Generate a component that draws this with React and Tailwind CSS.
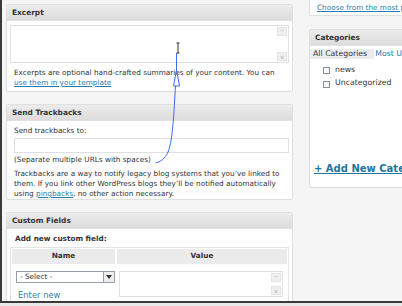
import React from 'react';

const font = { fontFamily: '"DejaVu Sans", Verdana, sans-serif' };

const Box = ({ title, className = '', children }) => (
  <div className={`shrink-0 border border-[#dfdfdf] bg-white rounded-[2px] ${className}`}>
    <div className="h-[16px] bg-gradient-to-b from-[#ececec] to-[#dcdcdc] border-b border-[#e2e2e2] px-[5px] flex items-center text-[7.4px] font-bold text-[#333]">
      {title}
    </div>
    {children}
  </div>
);

const ScrollArrows = () => (
  <div className="w-[10px] h-full flex flex-col justify-between py-[1px]">
    <div className="h-[9px] bg-[#f0f0f0] border border-[#e4e4e4] flex items-center justify-center text-[6px] text-[#aaa] leading-none">^</div>
    <div className="h-[9px] bg-[#f0f0f0] border border-[#e4e4e4] flex items-center justify-center text-[6px] text-[#aaa] leading-none">v</div>
  </div>
);

export default function App() {
  return (
    <div style={font} className="w-[402px] h-[306px] bg-[#e8e8e8] overflow-hidden relative">
      <div className="h-[303px] bg-[#f5f5f5] border-l-2 border-b-2 border-[#3a3a3a] flex gap-[16px] pl-[4px] overflow-hidden">
        {/* left column */}
        <div className="w-[287px] shrink-0 flex flex-col gap-[12px] pt-[4px]">
          <Box title="Excerpt" className="h-[88px]">
            <div className="mx-[3px] mt-[4px] h-[38px] border border-[#dfdfdf] flex justify-end pr-[1px]">
              <ScrollArrows />
            </div>
            <p className="pl-[7px] pr-[4px] mt-[5px] text-[7.3px] leading-[10px] text-[#333]">
              Excerpts are optional hand-crafted summaries of your content. You can{' '}
              <span className="text-[#2b7bb0] underline">use them in your template</span>
            </p>
          </Box>
          <Box title="Send Trackbacks" className="h-[96px]">
            <div className="pl-[7px] pr-[4px] pt-[5px] text-[7.3px] text-[#333]">
              <div className="leading-[10px]">Send trackbacks to:</div>
              <div className="mt-[2px] mr-[-1px] h-[15px] border border-[#dfdfdf]" />
              <div className="mt-[2px] leading-[10px]">(Separate multiple URLs with spaces)</div>
              <p className="mt-[4px] leading-[10px]">
                Trackbacks are a way to notify legacy blog systems that you’ve linked to them. If you link other WordPress blogs they’ll be notified automatically using{' '}
                <span className="text-[#2b7bb0] underline">pingbacks</span>, no other action necessary.
              </p>
            </div>
          </Box>
          <Box title="Custom Fields" className="h-[110px] rounded-b-none">
            <div className="px-[8px] pt-[5px] text-[7.3px] font-bold text-[#333] leading-[10px]">Add new custom field:</div>
            <div className="mx-[3px] mt-[3px] border border-[#e4e4e4] border-b-0 p-[1px]">
              <div className="flex gap-[2px] h-[15px] text-[7.3px] font-bold text-[#333]">
                <div className="w-[103px] bg-[#ebebeb] flex items-center justify-center">Name</div>
                <div className="flex-1 bg-[#ebebeb] flex items-center justify-center">Value</div>
              </div>
              <div className="flex gap-[4px] pt-[7px] px-[4px]">
                <div className="w-[99px] shrink-0">
                  <div className="h-[12px] border border-[#9aa0aa] flex items-center text-[7.3px] text-[#333]">
                    <span className="flex-1 pl-[3px]">- Select -</span>
                    <div className="w-[11px] h-full bg-[#eee] border-l border-[#9aa0aa] flex items-center justify-center">
                      <svg width="6" height="4" viewBox="0 0 6 4"><path d="M0 0h6L3 4z" fill="#333" /></svg>
                    </div>
                  </div>
                  <div className="mt-[6px] pl-[2px] text-[8.4px] text-[#2e80b0]">Enter new</div>
                </div>
                <div className="flex-1 h-[26px] border border-[#dfdfdf] flex justify-end pr-[1px]">
                  <ScrollArrows />
                </div>
              </div>
            </div>
          </Box>
        </div>
        {/* right column */}
        <div className="w-[120px] shrink-0 flex flex-col gap-[13px] -mt-[4px]">
          <div className="shrink-0 h-[20px] border border-[#dfdfdf] bg-white pl-[7px] pt-[6px] text-[7.3px] leading-[10px] text-[#2b7bb0] underline whitespace-nowrap">
            Choose from the most popular tags
          </div>
          <Box title="Categories" className="h-[159px] rounded-r-none">
            <div className="flex items-center mt-[3px] text-[7.8px] leading-[10px] whitespace-nowrap">
              <span className="bg-[#ececec] pl-[3px] pr-[7px] text-[#333]">All Categories</span>
              <span className="pl-[1px] text-[#2b7bb0]">Most Used</span>
            </div>
            <div className="pl-[13px] mt-[6px] flex flex-col gap-[4px] text-[7.8px] text-[#333] leading-[9px]">
              <div className="flex items-start gap-[5px]"><span className="w-[7px] h-[7px] mt-[2px] border border-[#8a9099] bg-[#f7f7f7]" />news</div>
              <div className="flex items-start gap-[5px]"><span className="w-[7px] h-[7px] mt-[3px] border border-[#8a9099] bg-[#f7f7f7]" />Uncategorized</div>
            </div>
            <div className="mt-[73px] pl-[4px] text-[10px] font-bold text-[#21759b] underline whitespace-nowrap">+ Add New Category</div>
          </Box>
        </div>
      </div>
      {/* annotation overlay */}
      <svg className="absolute inset-0 pointer-events-none" width="402" height="306" viewBox="0 0 402 306">
        <path d="M176.5 43h3M178 43v10M176.5 53h3" stroke="#333" strokeWidth="1" fill="none" />
        <path d="M176.5 53V70" stroke="#3b6cf0" strokeWidth="1" fill="none" />
        <path d="M176.5 70L173.5 86H179.5Z" stroke="#3b6cf0" strokeWidth="1" fill="none" />
        <path d="M175.5 86C174 110 173 140 168 152C165 159 160 162 155.5 163" stroke="#3b6cf0" strokeWidth="1" fill="none" />
      </svg>
    </div>
  );
}
